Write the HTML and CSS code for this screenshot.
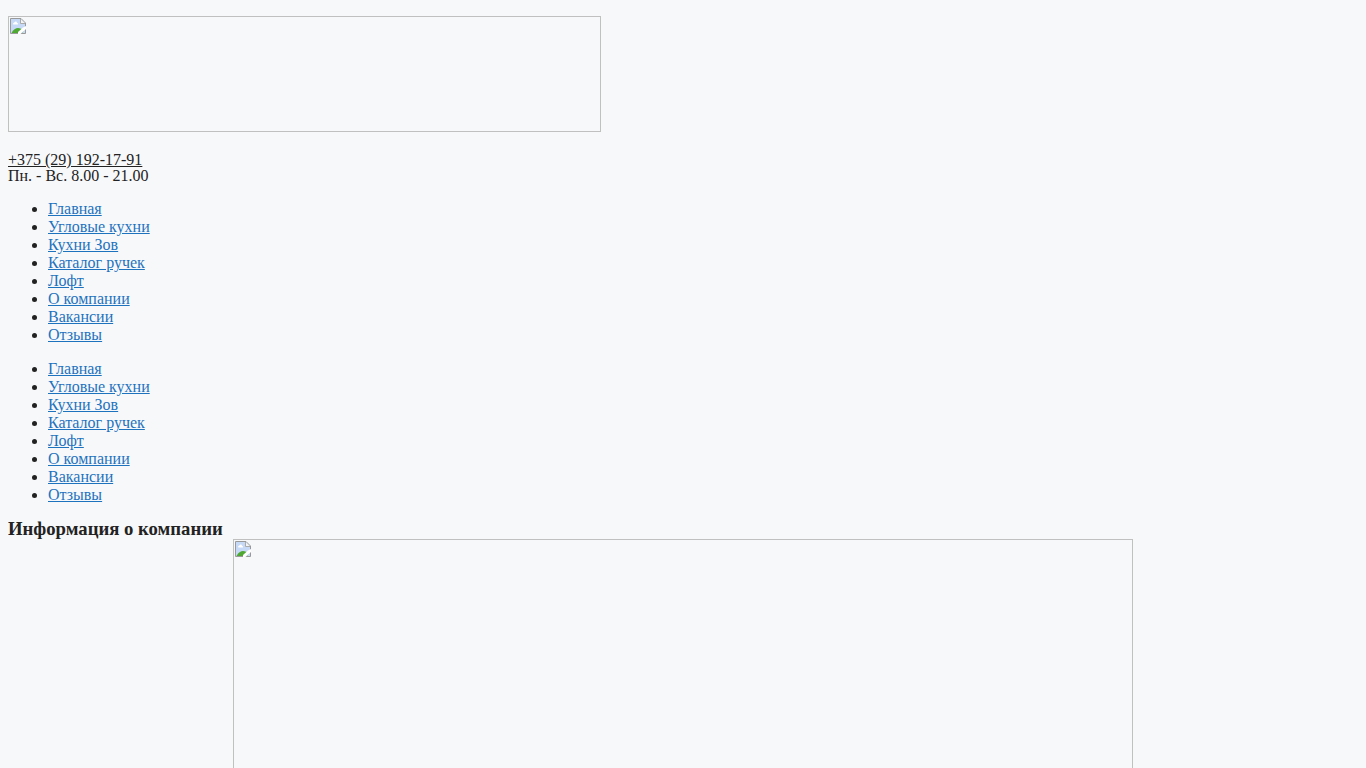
FILE: index.html
```html
<!DOCTYPE html>
<html lang="ru">
<head>
    <meta charset="UTF-8">
    <meta name="viewport" content="width=device-width, initial-scale=1.0">
    <title>Информация о компании</title>
    <link rel="stylesheet" href="styles.css">
</head>
<body>

    <svg class="icon-defs" aria-hidden="true">
        <symbol id="no-image" viewBox="0 0 16 16">
            <path d="M1 1H11L15 5V15H1Z" fill="#c6d9f7"/>
            <path d="M3 6C3 4.500 4.500 4.500 5 4C6 3 7 4 7 5C8.500 5 8.500 6.500 7.500 6.500H3.500Z" fill="#fff"/>
            <path d="M1.500 15C3 11.500 6 10 8 10C10 10 12 11 13.500 13L12 15Z" fill="#4fa832"/>
            <path d="M.5.5H11L15.500 5V15.500H.5Z" fill="none" stroke="#999"/>
            <path d="M10.500 1V5.500H15" fill="#f4f4f4" stroke="#aaa"/>
            <path d="M16 8L13 9.500L8 14V16H10.500L16 11Z" fill="#fff"/>
        </symbol>
    </svg>

    <header>
        <a class="picture logo" href="#" aria-label="Главная">
            <svg class="picture-icon"><use href="#no-image"/></svg>
        </a>
        <div class="contacts">
            <a href="tel:+375291921791">+375 (29) 192-17-91</a><br>
            Пн. - Вс. 8.00 - 21.00
        </div>
    </header>

    <nav>
        <ul class="menu">
            <li><a href="#">Главная</a></li>
            <li><a href="#">Угловые кухни</a></li>
            <li><a href="#">Кухни Зов</a></li>
            <li><a href="#">Каталог ручек</a></li>
            <li><a href="#">Лофт</a></li>
            <li><a href="#">О компании</a></li>
            <li><a href="#">Вакансии</a></li>
            <li><a href="#">Отзывы</a></li>
        </ul>
    </nav>

    <!-- mobile menu -->
    <nav>
        <ul class="menu">
            <li><a href="#">Главная</a></li>
            <li><a href="#">Угловые кухни</a></li>
            <li><a href="#">Кухни Зов</a></li>
            <li><a href="#">Каталог ручек</a></li>
            <li><a href="#">Лофт</a></li>
            <li><a href="#">О компании</a></li>
            <li><a href="#">Вакансии</a></li>
            <li><a href="#">Отзывы</a></li>
        </ul>
    </nav>

    <main>
        <h3>Информация о компании</h3>
        <div class="picture photo">
            <svg class="picture-icon"><use href="#no-image"/></svg>
        </div>
    </main>

</body>
</html>
```

FILE: styles.css
```css
body {
    margin: 16px 8px;
    font-family: "Liberation Serif", "Times New Roman", serif;
    font-size: 16px;
    line-height: 18px;
    color: #222;
    background-color: #f7f8fa;
}
a {
    color: #1e73be;
}
.icon-defs {
    display: none;
}
.picture {
    display: block;
    box-sizing: border-box;
    max-width: 100%;
    padding: 1px;
    border: 1px solid #c0c0c0;
}
.picture-icon {
    display: block;
    width: 16px;
    height: 16px;
}
.logo {
    width: 593px;
    height: 116px;
}
.contacts {
    margin-top: 20px;
    line-height: 16px;
}
.contacts a {
    color: #222;
}
.menu {
    margin: 16px 0;
    padding-left: 40px;
}
h3 {
    margin: 16px 0 1px;
}
.photo {
    width: 900px;
    height: 600px;
    margin: 0 auto;
}
```
